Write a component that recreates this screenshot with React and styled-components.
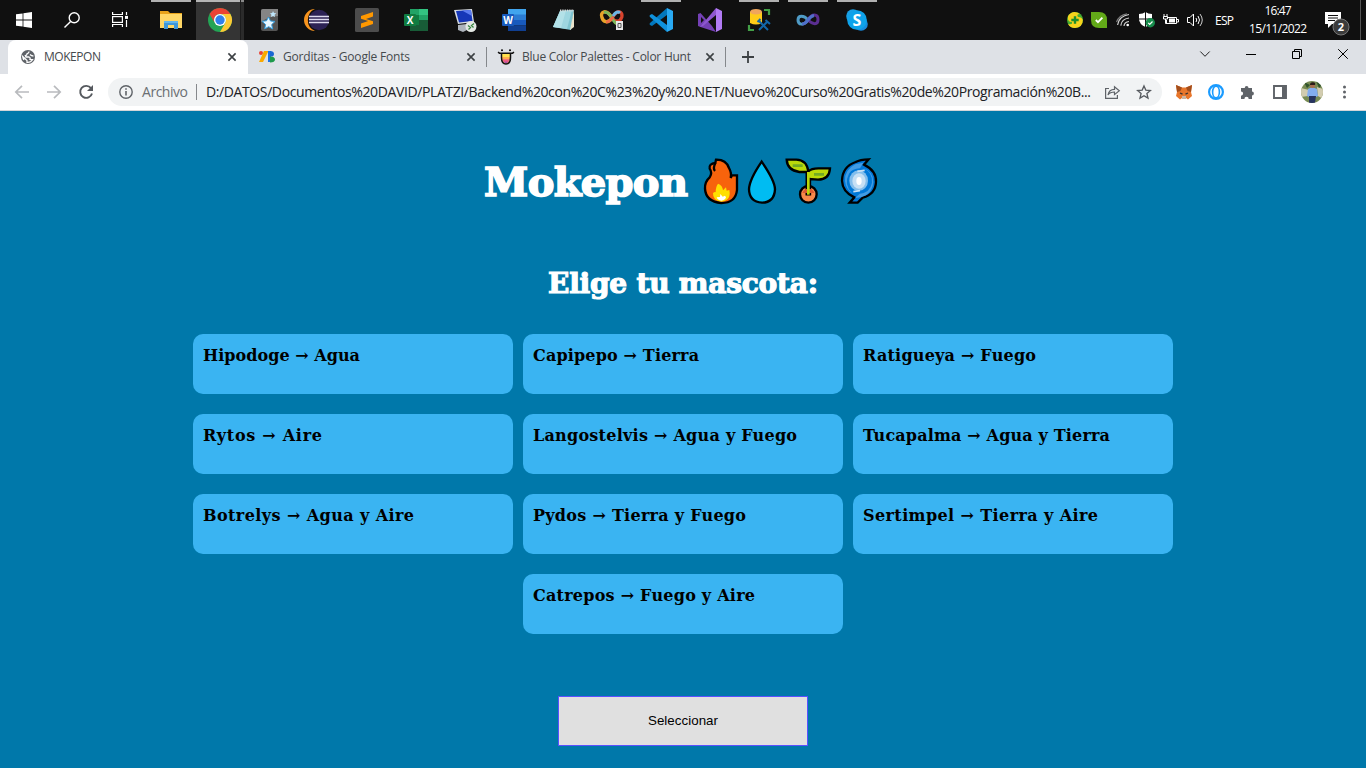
import React, { useLayoutEffect, useRef, useState } from 'react';
import styled, { createGlobalStyle } from 'styled-components';

const Global = createGlobalStyle`
  * { box-sizing: border-box; }
  html, body { margin: 0; padding: 0; overflow: hidden; }
  body { font-family: "Open Sans", "Noto Sans", sans-serif; background: #0078aa; }
  svg { display: block; flex: none; overflow: visible; }
`;

/* Text that is tracked so that it takes a given width. */
const FitSpan = styled.span`
  display: inline-block;
  white-space: pre;
  flex: none;
`;

function Fit({ w, children }) {
  const ref = useRef(null);
  const [gap, setGap] = useState(0);
  useLayoutEffect(() => {
    const natural = ref.current.getBoundingClientRect().width;
    setGap((w - natural) / (children.length - 1));
  }, []);
  return (
    <FitSpan ref={ref} style={{ letterSpacing: gap, marginRight: -gap }}>
      {children}
    </FitSpan>
  );
}

const Screen = styled.div`
  width: 1366px;
  height: 768px;
  display: flex;
  flex-direction: column;
  overflow: hidden;
`;

/* ---------- Taskbar ---------- */
const Taskbar = styled.header`
  height: 40px;
  flex: none;
  display: flex;
  background: #101010;
  color: #fff;
`;
const SystemButtons = styled.div`
  display: flex;
  width: 147px;
`;
const Slot = styled.div`
  width: 48px;
  height: 40px;
  display: flex;
  align-items: center;
  justify-content: center;
`;
const Apps = styled.div`
  display: flex;
  gap: 1px;
  flex: 1;
`;
const AppSlot = styled(Slot)`
  background: ${(p) =>
    p.$active
      ? 'linear-gradient(#b5b5b5, #b5b5b5) 0 0 / 44px 2px no-repeat, linear-gradient(#8a8a8a, #8a8a8a) 45px 0 / 3px 2px no-repeat, linear-gradient(90deg, #343434 44px, #1c1c1c 44px, #1c1c1c 45px, #2b2b2b 45px)'
      : p.$open
      ? 'linear-gradient(#b0b0b0, #b0b0b0) 4px 0 / 40px 2px no-repeat'
      : 'none'};
`;
const Tray = styled.div`
  display: flex;
  align-items: center;
  width: 303px;
  font-size: 12px;
`;
const TrayIcon = styled.div`
  width: 24px;
  display: flex;
  justify-content: center;
`;
const Language = styled.div`
  width: 34px;
  padding-left: 8px;
`;
const Clock = styled.div`
  width: 72px;
  margin-left: 1px;
  display: flex;
  flex-direction: column;
  align-items: center;
  line-height: 18px;
  padding-bottom: 1px;
`;
const Notify = styled.div`
  width: 47px;
  height: 40px;
  padding: 11px 0 0 11px;
  border-right: 1px solid #555;
`;

/* ---------- Browser chrome ---------- */
const TabStrip = styled.div`
  height: 34px;
  flex: none;
  display: flex;
  background: #dee1e6;
  padding-left: 8px;
  color: #45494d;
  font-size: 12px;
`;
const Tab = styled.div`
  width: ${(p) => p.$w}px;
  height: 34px;
  display: flex;
  align-items: center;
  justify-content: space-between;
  padding: 0 ${(p) => (p.$active ? 12 : 11)}px 0 ${(p) => p.$pad}px;
  background: ${(p) => (p.$active ? '#fff' : 'transparent')};
  border-radius: 8px 8px 0 0;
`;
const TabLabel = styled.div`
  display: flex;
  align-items: center;
  gap: ${(p) => p.$gap || 8}px;
  line-height: 16px;
`;
const Divider = styled.i`
  width: 1px;
  height: ${(p) => p.$h}px;
  flex: none;
  align-self: center;
  background: #85888c;
`;
const NewTab = styled.div`
  width: 44px;
  display: flex;
  align-items: center;
  justify-content: center;
`;
const WindowButtons = styled.div`
  margin-left: auto;
  display: flex;
  height: 28px;
`;
const WindowButton = styled.div`
  width: 46px;
  display: flex;
  align-items: center;
  justify-content: center;
`;
const Toolbar = styled.div`
  height: 37px;
  flex: none;
  display: flex;
  background: #fff;
  border-bottom: 1px solid #d3d5d8;
  padding: 4px 5px 4px 6px;
`;
const ToolButton = styled.div`
  width: 32px;
  height: 28px;
  flex: none;
  display: flex;
  align-items: center;
  justify-content: center;
`;
const Address = styled.div`
  width: 1054px;
  height: 28px;
  margin: 0 6px 0 6px;
  padding: 0 2px 0 11px;
  border-radius: 14px;
  background: #f1f3f4;
  display: flex;
  align-items: center;
  font-size: 14px;
  line-height: 18px;
  color: #202124;
`;
const Scheme = styled.span`
  margin: 0 8px 0 9px;
  padding-bottom: 1px;
  width: 46px;
  color: #6b6f73;
`;
const Url = styled.span`
  margin-left: 9px;
  padding-bottom: 1px;
  width: 890px;
`;

/* ---------- Page ---------- */
const Page = styled.main`
  flex: 1;
  background: #0078aa;
  display: flex;
  flex-direction: column;
  align-items: center;
  font-family: "DejaVu Serif", serif;
  font-weight: 700;
`;
const Title = styled.h1`
  margin: 46px 0 0;
  height: 50px;
  width: 398px;
  display: flex;
  align-items: center;
  font-size: 40px;
  line-height: 50px;
  color: #fff;
  -webkit-text-stroke: 1.6px #fff;
`;
const Emojis = styled.div`
  width: 177px;
  height: 48px;
  margin-left: 15px;
`;
const Subtitle = styled.h2`
  margin: 57px 0 0;
  height: 40px;
  font-size: 28px;
  line-height: 40px;
  color: #fff;
  -webkit-text-stroke: 1.2px #fff;
`;
const Pets = styled.section`
  width: 980px;
  margin-top: 30px;
  display: flex;
  flex-wrap: wrap;
  justify-content: center;
  gap: 20px 10px;
`;
const Pet = styled.label`
  width: 320px;
  height: 60px;
  padding: 10px;
  border-radius: 10px;
  background: #3ab4f2;
  color: #000;
  font-size: 16px;
  line-height: 24px;
`;
const Select = styled.button`
  width: 250px;
  height: 50px;
  margin-top: 62px;
  padding: 0 0 2px;
  border: 1px solid #5a50ff;
  background: #e0e0e0;
  color: #000;
  font: 13.33px "Liberation Sans", Arial, sans-serif;
`;

/* ---------- Drawings ---------- */
const WindowsLogo = () => (
  <svg width="16" height="16" fill="#fff"><path d="M0 2.3 6.6 1.4V7.6H0ZM7.4 1.3 16 0V7.6H7.4ZM0 8.4H6.6V14.6L0 13.7ZM7.4 8.4H16V16L7.4 14.8Z" /></svg>
);
const SearchIcon = () => (
  <svg width="16" height="16" fill="none" stroke="#fff" strokeWidth="1.4"><circle cx="10.2" cy="5.8" r="5" /><path d="M6.6 9.4.5 15.5" /></svg>
);
const TaskViewIcon = () => (
  <svg width="16" height="16" fill="none" stroke="#fff" strokeWidth="1.2"><path d="M.6 0V2.5H10.4V0M.6 15V12.5H10.4V15M14.5 0V3M14.5 8V15" /><rect x=".6" y="4.6" width="9.8" height="5.8" /><path d="M13 5.4H16" strokeWidth="3" /></svg>
);
const FolderIcon = () => (
  <svg width="22" height="19"><path d="M0 0H8L10 2H22V17H0Z" fill="#e8a31b" /><path d="M0 3H22V17H0Z" fill="#ffd766" /><path d="M4 18V10H18V18H14V14H8V18Z" fill="#3f96d8" /><path d="M4 10H18V12H4Z" fill="#62b5ec" /></svg>
);
const ChromeIcon = () => (
  <svg width="24" height="24" viewBox="0 0 24 24"><circle cx="12" cy="12" r="12" fill="#23a455" /><path d="M1.6 6A12 12 0 0 1 22.4 6H12A6 6 0 0 0 6.8 15Z" fill="#ea4335" /><path d="M22.4 6A12 12 0 0 1 12 24L17.2 15A6 6 0 0 0 12 6Z" fill="#fcc934" /><circle cx="12" cy="12" r="6" fill="#fff" /><circle cx="12" cy="12" r="4.7" fill="#2f80ed" /></svg>
);
const StarAppIcon = () => (
  <svg width="17" height="22"><rect width="17" height="22" rx="2" fill="#555" /><path d="M0 2Q0 0 2 0H17V7Q8 7 0 13Z" fill="#858585" /><path d="m7.5 8 2 4 4.5.4-3.3 3.2 1 4.4-4-2.3-4 2.2.9-4.4L1 12.3l4.5-.5Z" fill="#e9f7ff" stroke="#329de0" /><path d="m12 2 1 2 2.3.3-1.7 1.5.4 2.3-2-1.1-2 1 .4-2.2L9 4.2l2.2-.3Z" fill="#bfe6fb" /></svg>
);
const EclipseIcon = () => (
  <svg width="24" height="22"><path d="M9 0A11 11 0 0 0 9 22 12 12 0 0 1 9 0Z" fill="#f7941e" /><circle cx="13" cy="11" r="10.2" fill="#2c2255" /><path d="M3 7.5H23M3 10.5H23M3 13.5H23" stroke="#dedbef" strokeWidth="1.7" /></svg>
);
const SublimeIcon = () => (
  <svg width="24" height="24"><rect width="24" height="24" rx="1.5" fill="#4c4c4c" /><path d="M6 8 18 4V8.5L11 11 18 13.2V16L6 20V15.5L13.2 13 6 10.7Z" fill="#ff9800" /></svg>
);
const BoxText = styled.text`
  font: 700 ${(p) => p.$s || 10}px "Open Sans", sans-serif;
  fill: ${(p) => p.$c || '#fff'};
  text-anchor: middle;
`;
const ExcelIcon = () => (
  <svg width="24" height="22"><path d="M6 0H24V22H6Z" fill="#21a366" /><path d="M15 0H24V6H15Z" fill="#33c481" /><path d="M6 6H15V16H6Z" fill="#107c41" /><path d="M6 16H24V22H6ZM15 11H24V16H15Z" fill="#185c37" /><rect y="5" width="12" height="12" rx="1" fill="#107c41" /><BoxText x="6" y="14.5">X</BoxText></svg>
);
const WordIcon = () => (
  <svg width="24" height="22"><path d="M6 0H24V6H6Z" fill="#41a5ee" /><path d="M6 5.5H24V11H6Z" fill="#2b7cd3" /><path d="M6 11H24V16.5H6Z" fill="#185abd" /><path d="M6 16.5H24V22H6Z" fill="#103f91" /><rect y="5" width="12" height="12" rx="1" fill="#185abd" /><BoxText x="6" y="14.5">W</BoxText></svg>
);
const RemoteIcon = () => (
  <svg width="23" height="23"><path d="M0 1 18 0 20 13 4 15Z" fill="#d7dce2" /><path d="M2 2 17 1 18.5 12 5 13.5Z" fill="#1637b8" /><path d="M8 1.6 17 1 18 7Z" fill="#5c7cf0" /><path d="M4 16 13 15V21L9 23 4 21Z" fill="#aeb4bc" /><circle cx="17" cy="17.5" r="5.5" fill="#e4e8e4" /><path d="m14 16.5 2.5 2-2 2M20 14.5l-2.5 2 2 2" stroke="#378640" fill="none" strokeWidth="1.3" /></svg>
);
const NotepadIcon = () => (
  <svg width="23" height="22"><path d="M8 2 22 1 19 21 1 18Z" fill="#7fc4d0" /><path d="M8 2 20 1 15 20 1 18Z" fill="#9ed6e0" /><path d="M8 2 14 1.5 9 19 1 18Z" fill="#c2e7ec" opacity=".6" /><path d="M22 1 22 18 18 21Z" fill="#e8e3cb" /><path d="M8 1.5H22" stroke="#d6d9da" strokeWidth="2" strokeDasharray="1.3 1" /></svg>
);
const KnotIcon = () => (
  <svg width="24" height="20" fill="none"><path d="M12 8C6-2 0 2 1.8 7 3 12 8 14 12 8" stroke="#e8a329" strokeWidth="3.4" /><path d="M12 8C18-2 23 2 21.8 7 20 12 16 13 12 8" stroke="#d8432d" strokeWidth="3.4" /><path d="M4 2.5Q8 1 12 8T17 13" stroke="#7eb85a" strokeWidth="3" /><path d="M13 6Q17 0 20 3" stroke="#69b7e4" strokeWidth="3" /><path d="M6 12Q10 12 13 7" stroke="#ee6a45" strokeWidth="3" /><rect x="16" y="11" width="7" height="9" fill="#e7e7e7" /><path d="M18 13.5H21V17.5H18Z" stroke="#555" /></svg>
);
const VsCodeIcon = () => (
  <svg width="24" height="24"><path d="M18 0 24 3V21L18 24Z" fill="#29a9f2" /><path d="M18 0 1 15Q0 16 1 17L3 18 18 7Z" fill="#0277bd" /><path d="M18 24 1 9Q0 8 1 7L3 6 18 17Z" fill="#0f91dc" /></svg>
);
const VisualStudioIcon = () => (
  <svg width="24" height="24"><path d="M0 6 2.5 5 14 18 18 24 2.5 19 0 18Z M3 9V15L6 12Z" fillRule="evenodd" fill="#7440b5" /><path d="M2 19 18 0V7L5 18Z" fill="#8e57d0" /><path d="M18 0 24 3V21L18 24Z" fill="#b27bf5" /></svg>
);
const DataToolsIcon = () => (
  <svg width="23" height="22"><path d="M2 3V14Q8 17 14 14V3Z" fill="#ffcc19" /><ellipse cx="8" cy="2.8" rx="6" ry="2.8" fill="#f0a65d" /><path d="M16 1H21V6M1 16V21H6" fill="none" stroke="#43a047" strokeWidth="2.2" /><path d="m11 12 9 9M20 12l-9 9M9.5 13l3-3M17.5 11l4.5 4" stroke="#1267a8" strokeWidth="2" /></svg>
);
const InfinityIcon = () => (
  <svg width="24" height="14" fill="none" strokeWidth="3"><path d="M12 7C8 2 2 2 2 7s6 6 10 0" stroke="#4f9bc6" /><path d="M12 7C16 0 22 1 22 6.5S17 12 12 7" stroke="#5b2e91" /><path d="M6 11Q9 11 12 7T18 2.5" stroke="#4f6fc9" /></svg>
);
const SkypeIcon = () => (
  <svg width="22" height="22"><circle cx="7" cy="7" r="6.8" fill="#199fe4" /><circle cx="15" cy="15" r="6.8" fill="#168be0" /><circle cx="11" cy="11" r="9.8" fill="#0ea2ea" /><BoxText $s={16} x="11" y="16.7">S</BoxText></svg>
);

const apps = [
  [FolderIcon, 1], [ChromeIcon, 2], [StarAppIcon], [EclipseIcon], [SublimeIcon], [ExcelIcon],
  [RemoteIcon], [WordIcon], [NotepadIcon], [KnotIcon], [VsCodeIcon, 1], [VisualStudioIcon],
  [DataToolsIcon, 1], [InfinityIcon, 1], [SkypeIcon, 1],
];

const PlusBallIcon = () => (
  <svg width="16" height="16"><circle cx="8" cy="8" r="8" fill="#45ad31" /><path d="M1 4Q6-3 13 2 9 2 11 5 15 5 15.8 8 16 15 8 16 3 16 1 12 6 13 5 10 0 10 1 4Z" fill="#f6d31c" /><path d="M8 4.3V11.7M4.3 8H11.7" stroke="#1e8e2b" strokeWidth="2.4" /></svg>
);
const OkIcon = () => (
  <svg width="16" height="16"><path d="M8 0Q16 0 16 8V16H8Q0 16 0 8V0Z" fill="#62a918" /><path d="m4.8 8 2.2 2.2 4.4-4.5" stroke="#fff" fill="none" strokeWidth="1.8" /></svg>
);
const WifiIcon = () => (
  <svg width="14" height="14" fill="none" stroke="#d0d0d0" strokeWidth="1.2"><path d="M1.6 12Q3 3 13 1.5M4.8 12.6Q5.5 6 13 5M8 13Q8.4 9 13 8.5" /><path d="M.5 9Q3 2 11 .8" stroke="#777" /><circle cx="11.7" cy="12" r="1.3" fill="#fff" stroke="none" /></svg>
);
const ShieldIcon = () => (
  <svg width="16" height="16"><path d="M6.5 0Q9 2 13 2V7Q13 12 6.5 15 0 12 0 7V2Q4 2 6.5 0Z" fill="#fff" /><path d="M6.5 0V15M0 7H13" stroke="#101010" /><circle cx="11.3" cy="10.8" r="4.7" fill="#168c4b" /><path d="m9.2 10.8 1.5 1.5 2.8-2.8" stroke="#fff" fill="none" strokeWidth="1.2" /></svg>
);
const BatteryIcon = () => (
  <svg width="16" height="12" fill="none" stroke="#fff"><path d="M5 3.5H13.5V9.5H3.5V6M13.5 5.5H15.5V8H13.5M1 0V2.5M4 0V2.5M.5 2.5H4.5V5H.5ZM2.5 5V9.5H4" /><path d="M6 6.5H12" strokeWidth="4" /></svg>
);
const SpeakerIcon = () => (
  <svg width="16" height="14" fill="none" stroke="#fff"><path d="M.5 4.5H3L6.5 1V13L3 9.5H.5ZM9 5Q10.5 7 9 9M11 3Q14 7 11 11" /><path d="M13 1Q17.5 7 13 13" stroke="#ccc" /></svg>
);
const NotifyIcon = () => (
  <svg width="25" height="24"><path d="M0 1H16V13H7L3 17V13H0Z" fill="#fff" /><path d="M3 4.5H13M3 7H13M3 9.5H10" stroke="#101010" /><circle cx="16" cy="16" r="8" fill="#3b3b3b" stroke="#777" /><BoxText $s={11} x="16" y="20">2</BoxText></svg>
);

const CloseIcon = () => (
  <svg width="8" height="8"><path d="m.4.4 7.2 7.2M7.6.4.4 7.6" stroke="#3c4043" strokeWidth="1.6" /></svg>
);
const GlobeIcon = () => (
  <svg width="14" height="14"><circle cx="7" cy="7" r="7" fill="#5f6368" /><path d="M8 1.6Q8 3.2 6.2 3.6 6 5.4 4.4 5.6L5 7H8Q9.6 7.6 9 9.4L11.6 9.5Q9.5 12.8 6 12.4V10.6L4.4 9 1.7 6.5Q2 8.5 3 10M9 4.5Q10.5 6 12.4 6" fill="none" stroke="#fff" strokeWidth="1.3" /></svg>
);
const FontsIcon = () => (
  <svg width="16" height="12"><circle cx="2" cy="2" r="2" fill="#ea4335" /><path d="M5 0H9.5L4 11H0Z" fill="#fbaa00" /><path d="M9 0H12V11H9Z" fill="#1a73e8" /><path d="M11 0Q15 0 15 3T11 5.5Z" fill="#1967d2" /><path d="M11 5.5Q16 5.5 16 8.5T11 11.5Z" fill="#1e9a4b" /></svg>
);
const HuntIcon = () => (
  <svg width="16" height="16"><path d="M3.5 4V8.5Q3.5 15 8 15T12.5 8.5V4Z" fill="#ffe14d" /><path d="M4 8H12V10.5H4Z" fill="#ffac4d" /><path d="M4.2 10.3H11.8Q10.8 14.3 8 14.3T4.2 10.3Z" fill="#ef5c84" /><path d="M6 12.8H10Q8 15 6 12.8Z" fill="#8d4bb7" /><path d="M0 3.2 1.5 4.2H14.5L16 3.2M3.5 4V8.5Q3.5 15 8 15T12.5 8.5V4" fill="none" stroke="#111" strokeWidth="1.5" /><circle cx="4" cy="1.2" r="1" /><circle cx="12" cy="1.2" r="1" /></svg>
);
const Arrow = ({ flip }) => (
  <svg width="14" height="14" fill="none" stroke="#b9bbbe" strokeWidth="1.7"><path d={flip ? 'M0 7H13M7 .8 13.2 7 7 13.2' : 'M14 7H1M7 .8.8 7 7 13.2'} /></svg>
);
const ReloadIcon = () => (
  <svg width="14" height="14"><path d="M12 3.2A6 6 0 1 0 13 8.5" fill="none" stroke="#55595e" strokeWidth="1.9" /><path d="M14 0V6H8Z" fill="#55595e" /></svg>
);
const InfoIcon = () => (
  <svg width="14" height="14"><circle cx="7" cy="7" r="6.2" fill="none" stroke="#5f6368" strokeWidth="1.4" /><path d="M7 6V10.5M7 3.2V4.8" stroke="#5f6368" strokeWidth="1.6" /></svg>
);
const ShareIcon = () => (
  <svg width="15" height="13" fill="none" stroke="#5f6368" strokeWidth="1.2"><path d="M4 2.5H.6V12.4H12.4V9" /><path d="M3 9Q4 3.5 9.5 3.4V.8L14.3 4.8 9.5 8.6V6Q5 6 3 9Z" /></svg>
);
const BookmarkIcon = () => (
  <svg width="14" height="14"><path d="m7 .9 1.8 4.2 4.6.4-3.5 3 1.1 4.6L7 10.7l-4 2.4 1.1-4.6L.6 5.5l4.6-.4Z" fill="none" stroke="#55595e" strokeWidth="1.3" /></svg>
);
const FoxIcon = () => (
  <svg width="16" height="15"><path d="M0 0 6 2.5H10L16 0 15 7 16 11 12 14.5 10 13H6L4 14.5 0 11 1 7Z" fill="#e8762b" /><path d="M0 0 6 2.5 4.5 6 1 7ZM16 0 10 2.5 11.5 6 15 7Z" fill="#a34e1c" /><path d="M6 11H10V14H6Z" fill="#c9b5a2" /><path d="M4 8 6.5 9.2M12 8 9.5 9.2" stroke="#333" strokeWidth="1.3" /></svg>
);
const RingIcon = () => (
  <svg width="16" height="16" fill="none"><circle cx="8" cy="8" r="6.9" stroke="#1a9bff" strokeWidth="2.2" /><ellipse cx="8" cy="8" rx="3.4" ry="5.8" stroke="#1a9bff" strokeWidth="1.6" /></svg>
);
const PuzzleIcon = () => (
  <svg width="14" height="14"><path d="M0 3H3.7A1.9 1.9 0 1 1 7.5 3H11V6.6A1.9 1.9 0 1 1 11 10.4V14H7.7A2.1 2.1 0 0 0 3.4 14H0V10.7A2.1 2.1 0 0 0 0 6.4Z" fill="#5f6368" /></svg>
);
const PanelIcon = () => (
  <svg width="14" height="14"><path d="M1 1H13V13H1Z" fill="none" stroke="#5f6368" strokeWidth="1.9" /><path d="M9 1H13V13H9Z" fill="#5f6368" /></svg>
);
const AvatarIcon = () => (
  <svg width="22" height="22"><defs><clipPath id="round"><circle cx="11" cy="11" r="11" /></clipPath></defs><g clipPath="url(#round)"><path d="M0 0H22V22H0Z" fill="#788b54" /><path d="M0 7 8 9 7 15 0 16ZM16 6 22 8V18L17 15Z" fill="#d2ccb0" /><path d="M3 1 9 4 6 7ZM15 0 22 3 18 7Z" fill="#31532b" /><path d="M7 8Q11 5 16 8L17 15 15 16H8L6 15Z" fill="#82adf0" /><path d="M8 15H15L14 22H8Z" fill="#26335f" /><circle cx="11.5" cy="4.5" r="2.5" fill="#a66d50" /><path d="M9 4Q9 1 12 1.3T14 4Z" fill="#2b1d19" /></g></svg>
);
const DotsIcon = () => (
  <svg width="4" height="14" fill="#5f6368"><circle cx="2.5" cy="2" r="1.5" /><circle cx="2.5" cy="7" r="1.5" /><circle cx="2.5" cy="12" r="1.5" /></svg>
);

const ElementIcons = () => (
  <svg width="177" height="48" viewBox="699 38 531 144" strokeLinejoin="miter">
    <g stroke="#000" strokeWidth="7">
      <path d="M738 43Q768 42 777 68 786 84 782 98L786 90H801V134Q797 173 754 173 707 169 705 130 704 109 719 96 728 83 719 70 716 55 736 53Z" fill="#f7630c" />
      <path d="M736 53Q728 70 735 77" fill="none" />
      <path d="M875 49Q915 107 915 132 913 171 876 172 838 170 837 132 838 103 875 49Z" fill="#00bcf2" />
      <circle cx="1015" cy="147" r="25" fill="#f7894a" />
      <path d="M950 43H979Q1010 44 1015 78 1024 69 1045 69H1080Q1078 102 1044 103L1020 101V147H1010V80H988Q952 75 950 43Z" fill="#bad80a" />
      <path d="M1196 42 1182 58Q1219 76 1218 109 1217 146 1178 157L1163 172H1139L1153 156Q1117 139 1116 106 1117 64 1157 50 1170 43 1196 42Z" fill="#0078d7" />
    </g>
    <path d="M744 115Q758 120 759 135L768 126 770 136 778 134Q784 166 754 169 728 166 729 143 735 139 737 141 737 124 744 115Z" fill="#ffdf00" />
    <path d="M751 146 758 154 765 151 768 156Q766 165 754 166 742 165 740 156L750 155Z" fill="#fff" />
    <path d="M968 61H998M1032 87H1062" stroke="#73aa24" strokeWidth="8" />
    <path d="M997 143A19 19 0 0 1 1033 143Z" fill="#da5a32" />
    <path d="M1015 80V148" stroke="#bad80a" strokeWidth="8" />
    <path d="M1180 68Q1209 83 1206 112 1200 142 1169 145L1155 158Q1204 157 1210 111 1210 78 1180 68ZM1156 57Q1123 74 1125 107 1128 132 1147 145 1120 116 1137 85 1147 70 1170 69L1180 52Z" fill="#429ce3" />
    <ellipse cx="1166" cy="106" rx="28" ry="31" fill="#83beec" />
    <ellipse cx="1167" cy="107" rx="20" ry="23" fill="#c7e0f4" />
    <ellipse cx="1167" cy="107" rx="8" ry="12" fill="#fff" />
    <path d="M1184 75 1162 78M1150 139 1170 136" stroke="#c7e0f4" strokeWidth="5" />
  </svg>
);

const pets = [
  ['Hipodoge → Agua', 157], ['Capipepo → Tierra', 166], ['Ratigueya → Fuego', 173],
  ['Rytos → Aire', 119], ['Langostelvis → Agua y Fuego', 264], ['Tucapalma → Agua y Tierra', 247],
  ['Botrelys → Agua y Aire', 211], ['Pydos → Tierra y Fuego', 213], ['Sertimpel → Tierra y Aire', 235],
  ['Catrepos → Fuego y Aire', 222],
];

export default function App() {
  return (
    <Screen>
      <Global />
      <Taskbar>
        <SystemButtons>
          <Slot><WindowsLogo /></Slot>
          <Slot><SearchIcon /></Slot>
          <Slot><TaskViewIcon /></Slot>
        </SystemButtons>
        <Apps>
          {apps.map(([Icon, state], i) => (
            <AppSlot key={i} $open={state === 1} $active={state === 2}><Icon /></AppSlot>
          ))}
        </Apps>
        <Tray>
          {[PlusBallIcon, OkIcon, WifiIcon, ShieldIcon, BatteryIcon, SpeakerIcon].map((Icon, i) => (
            <TrayIcon key={i}><Icon /></TrayIcon>
          ))}
          <Language><Fit w={19}>ESP</Fit></Language>
          <Clock><Fit w={27}>16:47</Fit><Fit w={58}>15/11/2022</Fit></Clock>
          <Notify><NotifyIcon /></Notify>
        </Tray>
      </Taskbar>

      <TabStrip>
        <Tab $active $w={240} $pad={13}>
          <TabLabel $gap={9}><GlobeIcon /><Fit w={57}>MOKEPON</Fit></TabLabel>
          <CloseIcon />
        </Tab>
        <Tab $w={238} $pad={11}>
          <TabLabel><FontsIcon /><Fit w={127}>Gorditas - Google Fonts</Fit></TabLabel>
          <CloseIcon />
        </Tab>
        <Divider $h={20} />
        <Tab $w={238} $pad={11}>
          <TabLabel><HuntIcon /><Fit w={169}>Blue Color Palettes - Color Hunt</Fit></TabLabel>
          <CloseIcon />
        </Tab>
        <Divider $h={20} />
        <NewTab><svg width="12" height="12"><path d="M6 0V12M0 6H12" stroke="#3c4043" strokeWidth="1.8" /></svg></NewTab>
        <WindowButtons>
          <WindowButton><svg width="10" height="6"><path d="m.3.5 4.7 4.8L9.7.5" fill="none" stroke="#222" /></svg></WindowButton>
          <WindowButton><svg width="10" height="1"><path d="M0 .5H10" stroke="#000" /></svg></WindowButton>
          <WindowButton><svg width="10" height="10"><path d="M.5 2.5H7.5V9.5H.5ZM2.5 2.5V.5H9.5V7.5H7.5" fill="none" stroke="#000" /></svg></WindowButton>
          <WindowButton><svg width="10" height="10"><path d="m.2.2 9.6 9.6M9.8.2.2 9.8" stroke="#000" /></svg></WindowButton>
        </WindowButtons>
      </TabStrip>

      <Toolbar>
        <ToolButton><Arrow /></ToolButton>
        <ToolButton><Arrow flip /></ToolButton>
        <ToolButton><ReloadIcon /></ToolButton>
        <Address>
          <InfoIcon />
          <Scheme><Fit w={46}>Archivo</Fit></Scheme>
          <Divider $h={16} />
          <Url><Fit w={885}>D:/DATOS/Documentos%20DAVID/PLATZI/Backend%20con%20C%23%20y%20.NET/Nuevo%20Curso%20Gratis%20de%20Programación%20B...</Fit></Url>
          <ToolButton><ShareIcon /></ToolButton>
          <ToolButton><BookmarkIcon /></ToolButton>
        </Address>
        <ToolButton><FoxIcon /></ToolButton>
        <ToolButton><RingIcon /></ToolButton>
        <ToolButton><PuzzleIcon /></ToolButton>
        <ToolButton><PanelIcon /></ToolButton>
        <ToolButton><AvatarIcon /></ToolButton>
        <ToolButton><DotsIcon /></ToolButton>
      </Toolbar>

      <Page>
        <Title><Fit w={204}>Mokepon</Fit><Emojis><ElementIcons /></Emojis></Title>
        <Subtitle><Fit w={270}>Elige tu mascota:</Fit></Subtitle>
        <Pets>
          {pets.map(([name, w]) => <Pet key={name}><Fit w={w}>{name}</Fit></Pet>)}
        </Pets>
        <Select><Fit w={70}>Seleccionar</Fit></Select>
      </Page>
    </Screen>
  );
}
